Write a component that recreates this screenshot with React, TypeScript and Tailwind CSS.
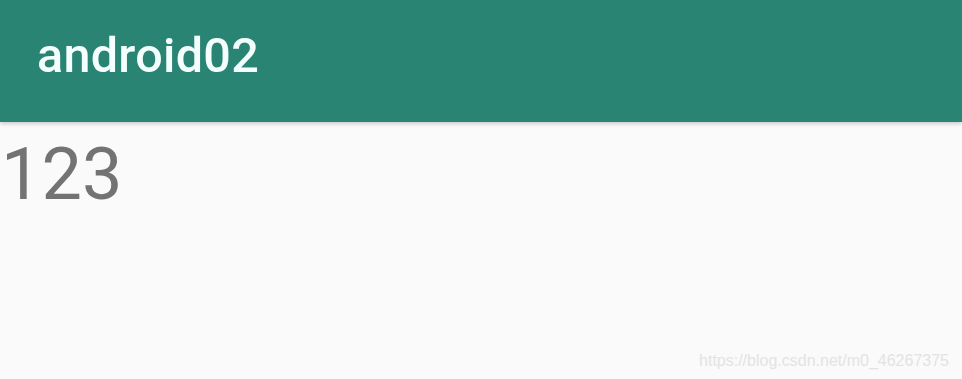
export default function App() {
  return (
    <div className="w-[962px] h-[379px] bg-[#fafafa] relative overflow-hidden font-['Roboto',sans-serif]">
      {/* App bar */}
      <div className="h-[122px] bg-[#2a8474] flex items-center pl-[37px] shadow-[0_2px_4px_rgba(0,0,0,0.18)] relative z-10">
        <h1 className="text-[48.5px] leading-none font-medium text-[#f4fffd] -mt-[10px] tracking-[0.3px]">android02</h1>
      </div>

      {/* Content */}
      <div className="pt-[17px] pl-[1px]">
        <p className="text-[72px] leading-none text-[#737373]">123</p>
      </div>

      {/* Watermark */}
      <span className="absolute right-[13px] bottom-[6px] text-[16px] text-[#e3e3e3] font-['Liberation_Sans',sans-serif]">
        https://blog.csdn.net/m0_46267375
      </span>
    </div>
  );
}
